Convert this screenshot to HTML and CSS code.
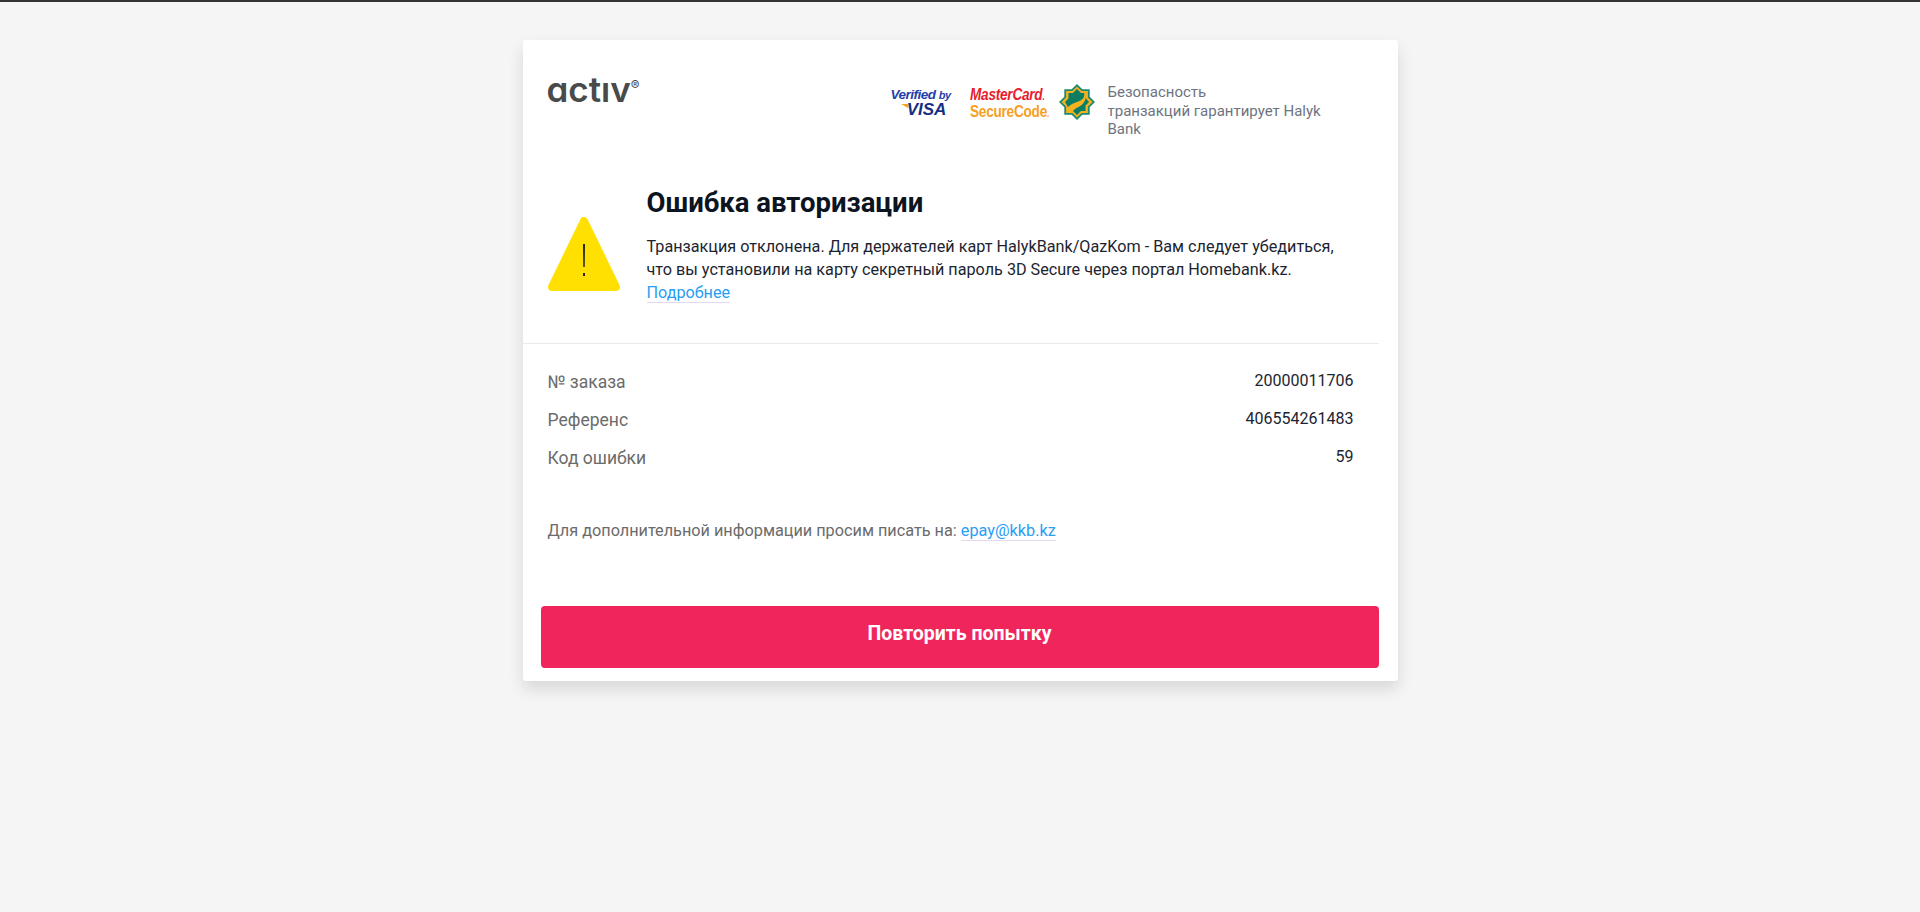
FILE: index.html
```html
<!DOCTYPE html>
<html lang="ru">

<head>
    <meta charset="UTF-8">
    <title>Ошибка авторизации</title>
    <link rel="stylesheet" href="styles.css">
</head>

<body>
    <div class="card">
        <div class="header">
            <div class="logo">act&#305;v<span class="logo-reg">&reg;</span></div>
            <div class="secure">
                <div class="visa">
                    <div class="visa-top">Verified <span class="visa-by">by</span></div>
                    <div class="visa-name">VISA</div>
                </div>
                <div class="mc">
                    <div class="mc-top">MasterCard<span class="mc-dot">.</span></div>
                    <div class="mc-code">SecureCode<span class="mc-dot">.</span></div>
                </div>
                <svg class="emblem" viewBox="0 0 36 36">
                    <path fill="#1c8a70" d="M18 0l5.300 5.300h7.400v7.400L36 18l-5.300 5.300v7.400h-7.400L18 36l-5.300-5.300H5.300v-7.400L0 18l5.300-5.300V5.300h7.400z"/>
                    <path fill="#f4b120" d="M18 2.500l4.600 4.600h6.300v6.300L33.500 18l-4.600 4.600v6.300h-6.300L18 33.500l-4.600-4.600H7.100v-6.300L2.500 18l4.600-4.600V7.100h6.300z"/>
                    <path fill="#0b7d62" d="M18 5l4 4h3c1 3-.5 6-3.500 7.500-4.500 2-8 2.500-12.500 6.500L6 18l3.500-3.500V9H14z"/>
                    <path fill="#0b7d62" d="M27 13v1.500L30 18l-3.500 3.500V27H22l-4 4-4-4c1.500-2 3.500-3 6.500-4.500 3-1.500 5.500-4.500 6.500-9.500z"/>
                </svg>
                <div class="secure-text">Безопасность<br>транзакций гарантирует Halyk Bank</div>
            </div>
        </div>

        <div class="status">
            <svg class="warn" viewBox="0 0 72 74">
                <path fill="#ffe000" stroke="#ffe000" stroke-width="8" stroke-linejoin="round" d="M36 4L68 70H4z"/>
                <path fill="#222222" d="M35 27h2l-.3 23h-1.400z"/>
                <rect fill="#222222" x="35" y="56" width="2" height="3"/>
            </svg>
            <div class="status-body">
                <h1 class="status-title">Ошибка авторизации</h1>
                <p class="status-text">Транзакция отклонена. Для держателей карт HalykBank/QazKom - Вам следует убедиться, что вы установили на карту секретный пароль 3D Secure через портал Homebank.kz. <a class="link" href="#">Подробнее</a></p>
            </div>
        </div>

        <div class="details">
            <div class="row"><span class="row-label">№ заказа</span><span class="row-value">20000011706</span></div>
            <div class="row"><span class="row-label">Референс</span><span class="row-value">406554261483</span></div>
            <div class="row"><span class="row-label">Код ошибки</span><span class="row-value">59</span></div>
        </div>

        <p class="contact">Для дополнительной информации просим писать на: <a class="link" href="#">epay@kkb.kz</a></p>

        <button class="retry">Повторить попытку</button>
    </div>
</body>

</html>
```

FILE: styles.css
```css
body {
    margin: 0;
    min-height: 910px;
    background: #f5f5f5;
    border-top: 2px solid #333;
    font-family: Roboto, "Liberation Sans", sans-serif;
}

.card {
    width: 856px;
    margin: 38px auto 0;
    padding: 0 19px 13px 0;
    background: #fff;
    border-radius: 3px;
    box-shadow: 0 8px 16px rgba(0, 0, 0, 0.12);
}

.header {
    display: flex;
    justify-content: space-between;
    padding: 32px 0 0 25px;
    height: 115px;
}

.logo {
    margin: -2px 0 0 -1px;
    font-family: Inter, sans-serif;
    font-feature-settings: "cv11";
    font-size: 35px;
    font-weight: 600;
    line-height: 30px;
    color: #4a4a4a;
}

.logo-reg {
    font-size: 13px;
    font-weight: 400;
    vertical-align: 12px;
}

.secure {
    display: flex;
    align-items: flex-start;
    width: 488px;
}

.visa {
    width: 60px;
    margin-top: 16px;
    margin-right: 19px;
    text-align: center;
    font-family: "Liberation Sans", sans-serif;
    font-style: italic;
    font-weight: 700;
    color: #1f40a8;
}

.visa-top {
    font-size: 13.5px;
    line-height: 13px;
    letter-spacing: -0.5px;
    white-space: nowrap;
}

.visa-by {
    font-size: 11px;
}

.visa-name {
    font-size: 17px;
    line-height: 15px;
    padding-left: 12px;
    color: #16307f;
}

.visa-name::before {
    content: "";
    display: inline-block;
    margin: 0 -1px 7px -6px;
    border-top: 4px solid #f4a51c;
    border-left: 7px solid transparent;
}

.mc {
    width: 77px;
    margin-top: 15px;
    margin-right: 12px;
    font-family: "Liberation Sans", sans-serif;
    font-size: 17px;
    font-weight: 700;
    line-height: 15px;
    letter-spacing: -0.3px;
    white-space: nowrap;
    transform: scaleX(0.8);
    transform-origin: left;
}

.mc-top {
    font-style: italic;
    color: #e8202a;
}

.mc-code {
    color: #f69f1e;
}

.mc-dot {
    font-size: 10px;
}

.emblem {
    width: 36px;
    height: 36px;
    flex: none;
    margin-top: 12px;
    margin-right: 13px;
}

.secure-text {
    width: 222px;
    margin-top: 11px;
    font-size: 15px;
    line-height: 18.5px;
    color: #6d7480;
}

.status {
    display: flex;
    align-items: flex-start;
    padding: 0 0 39px 25px;
    border-bottom: 1px solid #eaeaea;
}

.warn {
    width: 72px;
    height: 74px;
    flex: none;
    margin-top: 30px;
    margin-right: 27px;
}

.status-body {
    flex: 1;
    padding-right: 30px;
}

.status-title {
    margin: 0 0 16px;
    font-size: 27.5px;
    line-height: 32px;
    font-weight: 700;
    color: #0b1420;
}

.status-text {
    margin: 0;
    font-size: 16.2px;
    line-height: 23px;
    color: #1c2430;
}

.link {
    color: #2a9df4;
    text-decoration: none;
    border-bottom: 1px solid #e4d8ef;
}

.details {
    padding: 24px 25px 0 25px;
}

.row {
    display: flex;
    justify-content: space-between;
    height: 38px;
}

.row-label {
    font-size: 17.5px;
    line-height: 28px;
    color: #6b6b6b;
}

.row-value {
    font-size: 16px;
    line-height: 26px;
    color: #1c2430;
}

.contact {
    margin: 37px 0 0;
    padding-left: 25px;
    font-size: 16.25px;
    line-height: 24px;
    color: #6b6b6b;
}

.retry {
    display: block;
    width: 838px;
    height: 62px;
    margin: 63px 0 0 18px;
    padding: 0 0 8px;
    border: none;
    border-radius: 4px;
    background: #f0255b;
    color: #fff;
    font-family: Roboto, sans-serif;
    font-size: 19.5px;
    font-weight: 700;
    cursor: pointer;
}
```
